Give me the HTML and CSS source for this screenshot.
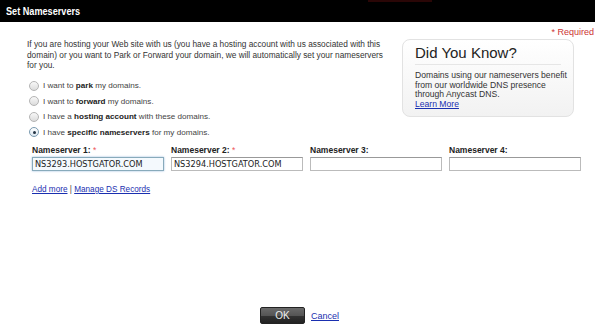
FILE: index.html
```
<!DOCTYPE html>
<html>
<head>
<meta charset="utf-8">
<link rel="stylesheet" href="styles.css">
</head>
<body>
<div class="header"><span class="title">Set Nameservers</span><span class="glow"></span></div>
<div class="content">
  <div class="required">* Required</div>
  <div class="top">
    <div class="left">
      <p class="intro">If you are hosting your Web site with us (you have a hosting account with us associated with this domain) or you want to Park or Forward your domain, we will automatically set your nameservers for you.</p>
      <ul class="options">
        <li><span class="radio"></span><span>I want to <b>park</b> my domains.</span></li>
        <li><span class="radio"></span><span>I want to <b>forward</b> my domains.</span></li>
        <li><span class="radio"></span><span>I have a <b>hosting account</b> with these domains.</span></li>
        <li><span class="radio checked"></span><span>I have <b>specific nameservers</b> for my domains.</span></li>
      </ul>
    </div>
    <div class="dyk">
      <div class="dyk-title">Did You Know?</div>
      <div class="dyk-body">Domains using our nameservers benefit<br>from our worldwide DNS presence<br>through Anycast DNS.<br><a href="#">Learn More</a></div>
    </div>
  </div>
  <div class="ns-row">
    <div class="ns"><label>Nameserver 1: <span class="star">*</span></label><div class="input focus">NS3293.HOSTGATOR.COM</div></div>
    <div class="ns"><label>Nameserver 2: <span class="star">*</span></label><div class="input">NS3294.HOSTGATOR.COM</div></div>
    <div class="ns"><label>Nameserver 3:</label><div class="input"></div></div>
    <div class="ns"><label>Nameserver 4:</label><div class="input"></div></div>
  </div>
  <div class="links"><a href="#">Add more</a> | <a href="#">Manage DS Records</a></div>
</div>
<div class="footer"><span class="ok">OK</span><a href="#">Cancel</a></div>
</body>
</html>
```
FILE: styles.css
```
html, body { margin: 0; padding: 0; }
body { width: 595px; height: 327px; background: #fff; font-family: "Liberation Sans", Arial, sans-serif; color: #333; position: relative; overflow: hidden; }
.header { height: 22px; background: #000; display: flex; align-items: center; padding-left: 6px; position: relative; }
.title { color: #fff; font-weight: bold; font-size: 11px; display: inline-block; transform: scaleX(0.83); transform-origin: left center; }
.glow { position: absolute; left: 368px; top: 0; width: 64px; height: 2px; background: #2a0606; }
.content { position: relative; padding: 0 0 0 27px; }
.required { position: absolute; right: 1px; top: 5px; color: #c33; font-size: 9px; }
.top { display: flex; padding-top: 17px; }
.left { width: 365px; flex: none; }
.intro { margin: 0; font-size: 8.3px; line-height: 10.5px; color: #333; width: 362px; }
.options { list-style: none; margin: 7.5px 0 0 2px; padding: 0; font-size: 8.1px; color: #444; }
.options li { height: 15.5px; display: flex; align-items: center; }
.options b { color: #222; }
.radio { width: 10px; height: 10px; border: 1px solid #b4b4b4; border-radius: 50%; background: linear-gradient(#f8f8f8, #dcdcdc); margin-right: 4px; box-sizing: border-box; position: relative; flex: none; }
.radio.checked { border-color: #7a9ab0; background: linear-gradient(#fff, #dbe6f0); }
.radio.checked::after { content: ""; position: absolute; left: 2.5px; top: 2.5px; width: 3px; height: 3px; border-radius: 50%; background: #234; }
.dyk { margin-left: 10px; width: 172px; height: 78px; flex: none; border: 1px solid #e2e2e2; border-radius: 8px; background: linear-gradient(#fff, #f2f2f2); box-sizing: border-box; padding: 4px 12px 0 12px; }
.dyk-title { font-size: 15px; line-height: 18px; color: #222; padding-bottom: 2px; border-bottom: 1px solid #e6e6e6; }
.dyk-body { font-size: 8.6px; line-height: 9.6px; color: #333; padding-top: 6px; white-space: nowrap; }
.dyk-body a { color: #1a2fb0; }
.ns-row { display: flex; gap: 7px; margin-top: 5px; padding-left: 5px; }
.ns { width: 132px; }
.ns label { display: block; font-size: 8.5px; font-weight: bold; color: #222; height: 12px; }
.star { color: #e55; font-weight: normal; }
.input { height: 14px; border: 1px solid #bbb; border-top-color: #999; box-sizing: border-box; font-family: "DejaVu Sans", Verdana, sans-serif; font-size: 8.2px; line-height: 12px; padding-left: 2px; color: #222; }
.input.focus { border: 1px solid #8ab; box-shadow: 0 0 2px #9bd; background: #f4f9fd; }
.links { padding-left: 5px; margin-top: 14px; font-size: 8.2px; color: #444; }
.links a { color: #1a2fb0; }
.footer { position: absolute; left: 260px; top: 307px; display: flex; align-items: center; gap: 6px; font-size: 9px; }
.ok { width: 45px; height: 17px; box-sizing: border-box; border-radius: 2px; background: linear-gradient(#6a6a6a 0%, #555 50%, #333 51%, #222 100%); color: #eee; font-size: 10px; display: flex; align-items: center; justify-content: center; border: 1px solid #222; }
.footer a { color: #1a2fb0; }
```
